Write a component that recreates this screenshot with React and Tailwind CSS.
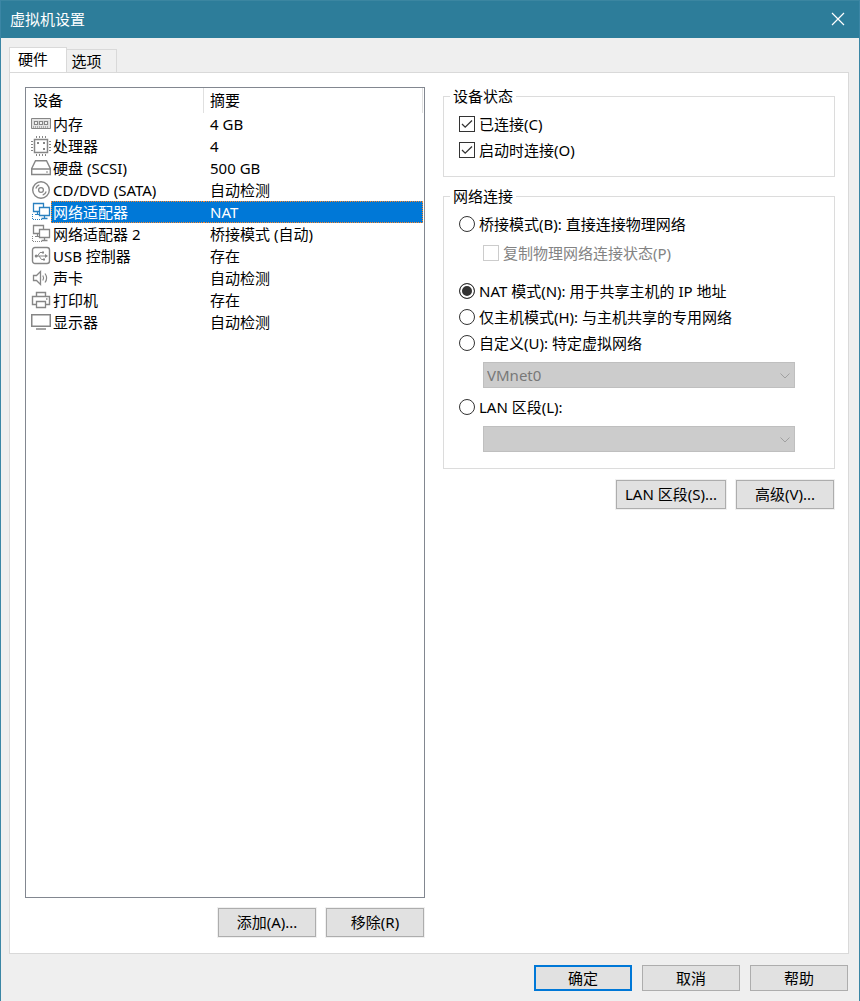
import { useState } from "react";

function Icon({ children, active }) {
  return (
    <svg
      viewBox="0 0 20 20"
      fill="none"
      stroke="currentColor"
      aria-hidden="true"
      className={`block h-5 w-5 ${active ? "text-[#2a80c0]" : "text-[#868686]"}`}
    >
      {children}
    </svg>
  );
}

const memory = (
  <>
    <path d="M.5 4.5h19v10H.5z" fill="#e4e4e4" />
    <path d="M3.5 7.5h3v3h-3zM8.5 7.5h3v3h-3zM13.5 7.5h3v3h-3z" fill="#fff" strokeWidth="1.2" />
    <path d="M2 13h16" strokeDasharray="1 1" strokeWidth="2" opacity=".6" />
  </>
);

const processor = (
  <>
    <path d="M3.5 3.5h13v13h-13z" strokeWidth="1.5" />
    <path d="M5.5 0v2M8.5 0v2M11.5 0v2M14.5 0v2M5.5 18v2M8.5 18v2M11.5 18v2M14.5 18v2" />
    <path d="M0 5.5h2M0 8.5h2M0 11.5h2M0 14.5h2M18 5.5h2M18 8.5h2M18 11.5h2M18 14.5h2" />
    <path d="M6 7h2M12 7h2M12 13h2" strokeWidth="2" />
  </>
);

const disk = (
  <>
    <path d="M.7 10.5 4.5 2.7h11l3.8 7.8v6H.7zM.7 11h18.6" strokeWidth="1.4" />
    <path d="M15 14h2" />
  </>
);

const cd = (
  <>
    <circle cx="10" cy="10" r="8.3" strokeWidth="1.4" />
    <circle cx="10" cy="10" r="2.4" strokeWidth="1.3" />
    <path d="M4.8 8.5a5.5 5.5 0 0 1 3.5-3.6M15.2 11.5a5.5 5.5 0 0 1-3.5 3.6" strokeWidth="1.2" />
  </>
);

const network = (
  <>
    <path d="M2.5 1.5h10v8h-10z" fill="#fff" strokeWidth="1.3" />
    <path d="M4 12.5h4M6.5 10v2" strokeWidth="1.2" />
    <path d="M8.5 5.5h10v8h-10z" fill="#fff" strokeWidth="1.3" />
    <path d="M13.5 14v2M10.5 16.5h6" strokeWidth="1.3" />
    <path d="M1.5 12v6M2 17.5h9" strokeDasharray="1 1" />
  </>
);

const usb = (
  <>
    <rect x="1.5" y="1.5" width="17" height="16" rx="2.5" strokeWidth="1.4" />
    <path d="M4.5 10h10M6.5 10 9 6.5h3M8 10l2.5 3.5h2" />
    <path d="m14 8 3 2-3 2zM11 5.5h2v2h-2zM12 12.5h2v2h-2z" fill="currentColor" stroke="none" />
    <circle cx="5.2" cy="10" r="1.5" fill="currentColor" stroke="none" />
  </>
);

const sound = (
  <>
    <path d="M2.5 7.5h3l4-4v13l-4-4h-3z" strokeWidth="1.3" />
    <path d="M11.8 7.5q1.6 2.5 0 5M14 5.5q3.2 4.5 0 9" strokeWidth="1.2" />
  </>
);

const printer = (
  <>
    <path d="M5.5 6.5v-4h9v4M5.5 14.5h-4v-8h17v8h-4" strokeWidth="1.4" />
    <path d="M5.5 11.5h9v6h-9zM15 9h1.5" strokeWidth="1.3" />
  </>
);

const display = (
  <>
    <path d="M.7 2.7h18.600v11.600H.7z" strokeWidth="1.6" />
    <path d="M5 17h10" strokeWidth="1.5" />
  </>
);

const devices = [
  { name: "内存", summary: "4 GB", icon: memory },
  { name: "处理器", summary: "4", icon: processor },
  { name: "硬盘 (SCSI)", summary: "500 GB", icon: disk },
  { name: "CD/DVD (SATA)", summary: "自动检测", icon: cd },
  { name: "网络适配器", summary: "NAT", icon: network },
  { name: "网络适配器 2", summary: "桥接模式 (自动)", icon: network },
  { name: "USB 控制器", summary: "存在", icon: usb },
  { name: "声卡", summary: "自动检测", icon: sound },
  { name: "打印机", summary: "存在", icon: printer },
  { name: "显示器", summary: "自动检测", icon: display },
];

function DeviceTable() {
  const [selected, setSelected] = useState(4);

  return (
    <div className="flex-1 border border-[#828790] pr-px">
      <table className="w-full table-fixed border-separate border-spacing-0 text-left">
        <colgroup>
          <col className="w-[25px]" />
          <col className="w-[153px]" />
          <col />
        </colgroup>
        <thead>
          <tr className="h-[25px]">
            <th colSpan={2} className="border-r border-[#e0e0e0] p-0 pb-px pl-[7px] font-normal">
              设备
            </th>
            <th className="border-r border-[#e0e0e0] p-0 pb-px pl-1.5 font-normal">摘要</th>
          </tr>
        </thead>
        <tbody>
          {devices.map((device, i) => {
            const active = i === selected;
            const cell = active
              ? "border-dotted border-[#ff8728] bg-[#0078d7] text-white"
              : "border-transparent";
            return (
              <tr key={device.name} className="h-[22px] leading-5" onClick={() => setSelected(i)}>
                <td className="p-0 pl-[5px]">
                  <Icon active={active}>{device.icon}</Icon>
                </td>
                <td className={`border-y border-l p-0 pl-px whitespace-nowrap ${cell}`}>{device.name}</td>
                <td className={`border-y border-r p-0 pl-1.5 whitespace-nowrap ${cell}`}>{device.summary}</td>
              </tr>
            );
          })}
        </tbody>
      </table>
    </div>
  );
}

function Button({ children, className = "" }) {
  return (
    <button
      type="button"
      className={`h-[29px] border border-[#adadad] bg-[#e1e1e1] pb-0.5 ring-1 ring-[#f0f0f0] hover:bg-[#e5f1fb] ${className}`}
    >
      {children}
    </button>
  );
}

function Group({ title, children, className = "" }) {
  return (
    <fieldset className={`min-w-0 border border-[#dcdcdc] px-1.5 ${className}`}>
      <legend className="px-[3px] leading-[18px]">{title}</legend>
      <div className="pt-1.5 pl-[9px]">{children}</div>
    </fieldset>
  );
}

function Checkbox({ label, disabled, ...props }) {
  return (
    <label className={`flex h-[26px] items-center gap-1 ${disabled ? "text-[#838383]" : ""}`}>
      <span className="grid h-4 w-4 shrink-0">
        <input
          type="checkbox"
          disabled={disabled}
          className="peer col-start-1 row-start-1 h-4 w-4 appearance-none border border-[#333] bg-white disabled:border-[#ccc]"
          {...props}
        />
        <svg
          viewBox="0 0 16 16"
          fill="none"
          stroke="#333"
          strokeWidth="1.3"
          className="pointer-events-none invisible col-start-1 row-start-1 h-4 w-4 peer-checked:visible"
        >
          <path d="m3 8 3.2 3.2L13 4.5" />
        </svg>
      </span>
      {label}
    </label>
  );
}

function Radio({ label, ...props }) {
  return (
    <label className="flex h-[26px] items-center gap-1">
      <input
        type="radio"
        name="connection"
        className="h-4 w-4 shrink-0 appearance-none rounded-full border border-[#333] bg-white checked:bg-[#333] checked:shadow-[inset_0_0_0_2px_#fff]"
        {...props}
      />
      {label}
    </label>
  );
}

function Select({ label, options, disabled }) {
  return (
    <div className="relative my-1.5 mr-[33px] ml-6">
      <select
        aria-label={label}
        disabled={disabled}
        className="block h-[26px] w-full appearance-none border border-[#bfbfbf] bg-[#ccc] pl-[3px] text-[#787878] opacity-100"
      >
        {options.map((option) => (
          <option key={option}>{option}</option>
        ))}
      </select>
      <svg
        viewBox="0 0 10 6"
        fill="none"
        stroke="#a0a0a0"
        className="pointer-events-none absolute top-[11px] right-[5px] h-1.5 w-2.5"
      >
        <path d="M.5 .5 5 5 9.5 .5" />
      </svg>
    </div>
  );
}

function AdapterSettings() {
  const [mode, setMode] = useState("nat");
  const radio = (value) => ({ value, checked: mode === value, onChange: () => setMode(value) });

  return (
    <div className="flex min-w-0 flex-col">
      <Group title="设备状态" className="pb-[13px]">
        <Checkbox label="已连接(C)" defaultChecked />
        <Checkbox label="启动时连接(O)" defaultChecked />
      </Group>
      <Group title="网络连接" className="mt-2.5 pb-2.5">
        <Radio label="桥接模式(B): 直接连接物理网络" {...radio("bridged")} />
        <div className="mt-[3px] mb-3 ml-6">
          <Checkbox label="复制物理网络连接状态(P)" disabled={mode !== "bridged"} />
        </div>
        <Radio label="NAT 模式(N): 用于共享主机的 IP 地址" {...radio("nat")} />
        <Radio label="仅主机模式(H): 与主机共享的专用网络" {...radio("hostonly")} />
        <Radio label="自定义(U): 特定虚拟网络" {...radio("custom")} />
        <Select label="特定虚拟网络" options={["VMnet0"]} disabled={mode !== "custom"} />
        <Radio label="LAN 区段(L):" {...radio("lan")} />
        <Select label="LAN 区段" options={[""]} disabled={mode !== "lan"} />
      </Group>
      <div className="mt-[11px] mr-px flex justify-end gap-2.5">
        <Button className="w-[110px]">LAN 区段(S)...</Button>
        <Button className="w-[98px]">高级(V)...</Button>
      </div>
    </div>
  );
}

export default function App() {
  return (
    <div className="flex min-h-screen flex-col border-x border-[#3b86a5] bg-[#efefef] font-['Noto_Sans','Noto_Sans_CJK_SC',sans-serif] text-[15px] leading-5 text-black">
      <header className="flex h-[38px] items-center justify-between border-t border-[#3b86a1] bg-[#2d7d9a] pr-[14px] pb-px pl-[9px] text-white">
        <h1>虚拟机设置</h1>
        <button type="button" aria-label="关闭">
          <svg viewBox="0 0 14 14" stroke="#fff" strokeWidth="1.2" className="block h-3.5 w-3.5">
            <path d="m1 1 12 12M13 1 1 13" />
          </svg>
        </button>
      </header>

      <div role="tablist" className="mt-[9px] ml-2 flex items-end">
        <button
          type="button"
          role="tab"
          aria-selected="true"
          className="-mb-px h-[26px] w-[58px] border border-b-0 border-[#d9d9d9] bg-white pr-2.5 pb-1"
        >
          硬件
        </button>
        <button
          type="button"
          role="tab"
          aria-selected="false"
          className="h-[23px] w-[50px] border border-b-0 border-l-0 border-[#d9d9d9] bg-[#f0f0f0] pr-2.5"
        >
          选项
        </button>
      </div>

      <main className="mr-2.5 ml-2 grid flex-1 grid-cols-[minmax(0,400fr)_minmax(0,392fr)] gap-x-[18px] border border-[#d9d9d9] bg-white pt-3.5 pr-[13px] pb-4 pl-[15px]">
        <div className="flex flex-col">
          <DeviceTable />
          <div className="mt-2.5 mr-px flex justify-end gap-2.5">
            <Button className="w-[98px]">添加(A)...</Button>
            <Button className="w-[98px]">移除(R)</Button>
          </div>
        </div>
        <AdapterSettings />
      </main>

      <footer className="flex justify-end gap-2.5 pt-[11px] pr-[11px] pb-2.5">
        <button type="button" className="h-[26px] w-[98px] border-2 border-[#0078d7] bg-[#e1e1e1]">
          确定
        </button>
        <button type="button" className="h-[26px] w-[98px] border border-[#adadad] bg-[#e1e1e1]">
          取消
        </button>
        <button type="button" className="h-[26px] w-[98px] border border-[#adadad] bg-[#e1e1e1]">
          帮助
        </button>
      </footer>
    </div>
  );
}
